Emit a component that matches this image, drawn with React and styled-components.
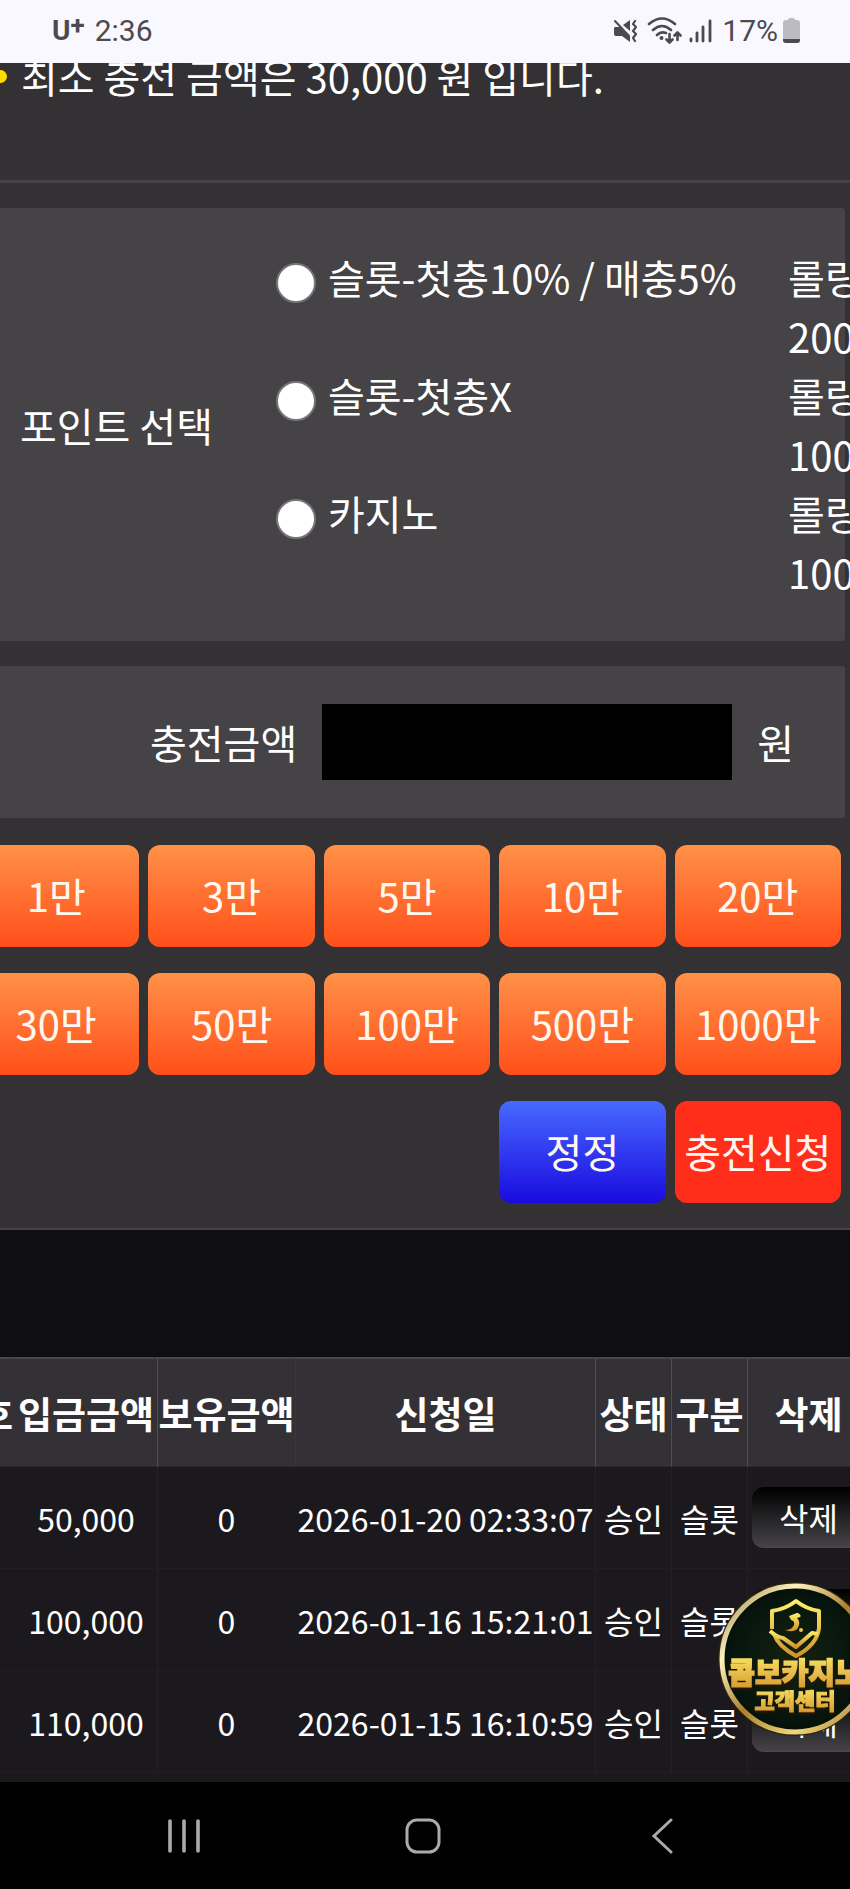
import { useState } from "react";
import styled, { createGlobalStyle } from "styled-components";

const GlobalStyle = createGlobalStyle`
	* {
		box-sizing: border-box;
	}

	body {
		margin: 0;
		background: #000;
		font-family: "Noto Sans CJK KR", "Noto Sans", sans-serif;
		color: #fff;
	}

	button, input {
		font-family: inherit;
		color: inherit;
	}
`;

const Page = styled.div`
	position: relative;
	display: flex;
	flex-direction: column;
	min-height: 100vh;
	overflow: hidden;
	background: #0f0e12;
`;

const StatusBar = styled.header`
	display: flex;
	justify-content: space-between;
	align-items: center;
	height: 63px;
	padding: 0 50px 2px 52px;
	background: #f9f8ff;
	color: #4c4a50;
	font-family: Roboto, sans-serif;
	font-size: 30px;
	line-height: 36px;
`;

const StatusGroup = styled.div`
	display: flex;
	align-items: center;
	gap: ${(props) => props.$gap}px;
`;

const Carrier = styled.span`
	display: flex;
	align-items: flex-start;
	font-size: 28px;
	font-weight: 700;

	sup {
		font-size: 26px;
		line-height: 24px;
	}
`;

const Form = styled.form`
	margin-left: -28px;
	background: #343134;
	border-bottom: 2px solid #454348;
	font-size: 40px;
	line-height: 59px;
	white-space: nowrap;
`;

const Notice = styled.div`
	display: flex;
	flex-direction: column;
	justify-content: flex-end;
	height: 120px;
	padding: 0 0 74px 22px;
	border-bottom: 3px solid #454346;
	overflow: hidden;

	p {
		display: flex;
		align-items: center;
		gap: 14px;
		margin: 0;
	}
`;

const Bullet = styled.i`
	width: 13px;
	height: 13px;
	border-radius: 50%;
	background: #ffdc00;
`;

const Panel = styled.div`
	margin: 25px 5px 0 0;
	border-radius: 3px;
	background: #454346;
`;

const PointPanel = styled(Panel)`
	display: grid;
	grid-template-columns: 256px 1fr;
	align-items: center;
	padding: 40px 0 39px 48px;
`;

const Option = styled.div`
	display: grid;
	grid-template-columns: 1fr 57px;

	label {
		display: flex;
		align-items: center;
		align-self: start;
		gap: 12px;
	}
`;

const Radio = styled.input`
	appearance: none;
	width: 40px;
	height: 40px;
	margin: 10px 0 0;
	border: 2px solid #767478;
	border-radius: 50%;
	background: #fff;

	&:checked {
		box-shadow: inset 0 0 0 8px #fff;
		background: #1a73e8;
	}
`;

const AmountPanel = styled(Panel)`
	display: flex;
	align-items: center;
	gap: 25px;
	padding: 38px 51px 38px 178px;
`;

const AmountInput = styled.input`
	flex: 1;
	min-width: 0;
	height: 76px;
	padding: 0 16px;
	border: 0;
	border-radius: 0;
	background: #000;
	font-size: 40px;
	text-align: right;
`;

const ButtonGrid = styled.div`
	display: grid;
	grid-template-columns: repeat(5, 1fr);
	gap: 26px 9px;
	padding: 27px 9px 25px 1px;
`;

const tones = {
	orange: "linear-gradient(#ff9148, #ff4f1a)",
	blue: "linear-gradient(#4869ff, #190be0)",
	red: "#ff2e1a",
};

const Button = styled.button`
	height: 102px;
	padding: 0 0 1px;
	border: 0;
	border-radius: 12px;
	background: ${(props) => tones[props.$tone]};
	color: #fff8f0;
	font-size: 40px;
	line-height: 59px;
	white-space: nowrap;
`;

const ResetButton = styled(Button)`
	grid-column: 4;
`;

const History = styled.section`
	flex: 1;
	margin: 127px -20px 0 -56px;
	background: #1b191d;
`;

const Table = styled.table`
	width: 100%;
	table-layout: fixed;
	border-collapse: separate;
	border-spacing: 0;
	text-align: center;
	white-space: nowrap;

	th, td {
		padding: 0;
	}

	th {
		height: 110px;
		border-top: 2px solid #48464a;
		border-right: 1px solid #504e52;
		border-bottom: 1px solid #2b292d;
		background: #343136;
		font-size: 37px;
		line-height: 54px;
		font-weight: 700;
	}

	th:nth-child(1) {
		border-right-color: transparent;
	}

	th:nth-child(3) {
		border-right-color: #38363a;
	}

	td {
		height: 102px;
		border-right: 1px solid #232125;
		border-bottom: 1px solid #201e22;
		font-size: 32px;
		line-height: 46px;
	}

	td:nth-child(1), td:nth-child(3) {
		border-right-color: transparent;
	}
`;

const Col = styled.col`
	width: ${(props) => props.$width}px;
`;

const DeleteButton = styled.button`
	display: block;
	width: 114px;
	height: 61px;
	margin: 0 auto;
	padding: 0;
	border: 0;
	border-bottom: 1px solid #4c4a4e;
	border-radius: 12px;
	background: linear-gradient(#000, #454347);
	font-size: 32px;
	line-height: 46px;
`;

const SupportLink = styled.a`
	position: absolute;
	right: -22px;
	bottom: 153px;
	width: 154px;
	height: 154px;

	svg {
		display: block;
	}

	text {
		filter: drop-shadow(0 2px 1px #2a1605);
	}
`;

const NavBar = styled.nav`
	display: grid;
	grid-template-columns: repeat(3, 1fr);
	height: 107px;
	padding: 0 69px 0 64px;
	background: #000;
`;

const NavButton = styled.button`
	display: flex;
	justify-content: center;
	align-items: center;
	padding: 0;
	border: 0;
	background: none;
	color: #aba9ad;
`;

const points = [
	{ id: "slot-bonus", name: "슬롯-첫충10% / 매충5%", rolling: "200" },
	{ id: "slot-none", name: "슬롯-첫충X", rolling: "100" },
	{ id: "casino", name: "카지노", rolling: "100" },
];

const amounts = [1, 3, 5, 10, 20, 30, 50, 100, 500, 1000];

const columns = [
	{ name: "번호", width: 71 },
	{ name: "입금금액", width: 143 },
	{ name: "보유금액", width: 138 },
	{ name: "신청일" },
	{ name: "상태", width: 76 },
	{ name: "구분", width: 76 },
	{ name: "삭제", width: 122 },
];

const requests = [
	{ amount: "50,000", date: "2026-01-20 02:33:07" },
	{ amount: "100,000", date: "2026-01-16 15:21:01" },
	{ amount: "110,000", date: "2026-01-15 16:10:59" },
];

function MuteIcon() {
	return (
		<svg width="24" height="24" viewBox="0 0 24 24" fill="none" stroke="currentColor" strokeLinecap="round" strokeLinejoin="round">
			<path d="M2 8h5l10 9v6l-8-6H3q-2 0-2-2v-5q0-2 1-2z" fill="currentColor" stroke="none" />
			<path d="M10 6l7-5v11z" fill="currentColor" stroke="none" />
			<path d="M2 2l14 15" strokeWidth="2" />
			<path d="M22 2l-2 3 3 3-3 4 3 3-3 4 2 3" strokeWidth="2.200" />
		</svg>
	);
}

function WifiIcon() {
	return (
		<svg width="35" height="27" viewBox="0 0 35 27" fill="none" stroke="currentColor" strokeWidth="2.600" strokeLinecap="round" strokeLinejoin="round">
			<path d="M2 7Q15-4 28 7M6 13q9-8 18 0M10 18q4-4 9-2" />
			<circle cx="14.500" cy="21" r="2" fill="currentColor" stroke="none" />
			<path d="M22.500 17v8M19.500 22.500l3 3 3-3M30.500 23v-7M27.500 18.500l3-3 3 3" />
		</svg>
	);
}

function SignalIcon() {
	return (
		<svg width="23" height="24" viewBox="0 0 23 24" stroke="currentColor" strokeWidth="2.800" strokeLinecap="round">
			<path d="M2 20v2M8 14v8M14 8v14M21 2v20" />
		</svg>
	);
}

function BatteryIcon() {
	return (
		<svg width="17" height="26" viewBox="0 0 17 26">
			<path d="M5 2q0-2 2-2h3q2 0 2 2h2q3 0 3 3v17q0 3-3 3H3q-3 0-3-3V5q0-3 3-3z" fill="#bdbbc2" />
			<path d="M0 21h17v1q0 3-3 3H3q-3 0-3-3z" fill="#4c4a50" />
		</svg>
	);
}

function SupportBadge() {
	return (
		<svg width="154" height="154" viewBox="0 0 154 154">
			<defs>
				<radialGradient id="felt">
					<stop offset="0" stopColor="#17200d" />
					<stop offset="0.6" stopColor="#0a1a0f" />
					<stop offset="1" stopColor="#04110a" />
				</radialGradient>
				<linearGradient id="rim" x1="0" y1="0" x2="1" y2="1">
					<stop offset="0" stopColor="#8c7434" />
					<stop offset="0.25" stopColor="#fff3c0" />
					<stop offset="0.5" stopColor="#a8802f" />
					<stop offset="0.75" stopColor="#f3d57c" />
					<stop offset="1" stopColor="#8c6a24" />
				</linearGradient>
				<linearGradient id="gold" x1="0" y1="0" x2="0" y2="1">
					<stop offset="0" stopColor="#fff06a" />
					<stop offset="1" stopColor="#d2932e" />
				</linearGradient>
			</defs>
			<circle cx="77" cy="77" r="77" fill="#2c2410" />
			<circle cx="77" cy="77" r="73" fill="url(#felt)" stroke="url(#rim)" strokeWidth="5" />
			<g fill="none" stroke="url(#gold)" strokeWidth="4" strokeLinejoin="round">
				<path d="M54 47V29q14-2 24-10 10 8 23 10v17q-2 17-23 28-18-10-22-22" />
				<path d="M52 49q8 7 13 7l13 9 16-14 6 1" />
			</g>
			<path d="M79 31l-8 3 2 4q4 1 3 5-2 5-9 5 12 4 14-5 1-4-2-7 7-1 1-5z" fill="url(#gold)" />
			<circle cx="83" cy="48" r="2" fill="#e9c34e" />
			<g textAnchor="middle" fontFamily="'Noto Sans CJK KR', sans-serif" fontWeight="900" fill="url(#gold)" stroke="url(#gold)">
				<text x="77" y="102" fontSize="29" strokeWidth="1.500">콤보카지노</text>
				<text x="77" y="127" fontSize="22" strokeWidth="1">고객센터</text>
			</g>
		</svg>
	);
}

function ChargeForm() {
	const [amount, setAmount] = useState("");

	return (
		<Form onSubmit={(e) => e.preventDefault()}>
			<Notice>
				<p>
					<Bullet />
					최소 충전 금액은 30,000 원 입니다.
				</p>
			</Notice>
			<PointPanel role="radiogroup" aria-labelledby="point-title">
				<span id="point-title">포인트 선택</span>
				<div>
					{points.map((point) => (
						<Option key={point.id}>
							<label htmlFor={point.id}>
								<Radio type="radio" name="point" id={point.id} />
								{point.name}
							</label>
							<span>
								롤링
								<br />
								{point.rolling}
							</span>
						</Option>
					))}
				</div>
			</PointPanel>
			<AmountPanel>
				<label htmlFor="amount">충전금액</label>
				<AmountInput id="amount" value={amount} onChange={(e) => setAmount(e.target.value)} />
				<span>원</span>
			</AmountPanel>
			<ButtonGrid>
				{amounts.map((value) => (
					<Button key={value} type="button" $tone="orange" onClick={() => setAmount(String(value * 10000))}>
						{value}만
					</Button>
				))}
				<ResetButton type="button" $tone="blue" onClick={() => setAmount("")}>정정</ResetButton>
				<Button type="submit" $tone="red">충전신청</Button>
			</ButtonGrid>
		</Form>
	);
}

function RequestTable() {
	return (
		<History>
			<Table>
				<colgroup>
					{columns.map((column) => (
						<Col key={column.name} $width={column.width} />
					))}
				</colgroup>
				<thead>
					<tr>
						{columns.map((column) => (
							<th key={column.name} scope="col">{column.name}</th>
						))}
					</tr>
				</thead>
				<tbody>
					{requests.map((request) => (
						<tr key={request.date}>
							<td></td>
							<td>{request.amount}</td>
							<td>0</td>
							<td>{request.date}</td>
							<td>승인</td>
							<td>슬롯</td>
							<td>
								<DeleteButton type="button">삭제</DeleteButton>
							</td>
						</tr>
					))}
				</tbody>
			</Table>
		</History>
	);
}

function App() {
	return (
		<>
			<GlobalStyle />
			<Page>
				<StatusBar>
					<StatusGroup $gap={10}>
						<Carrier>U<sup>+</sup></Carrier>
						<span>2:36</span>
					</StatusGroup>
					<StatusGroup $gap={10}>
						<MuteIcon />
						<StatusGroup $gap={7}>
							<WifiIcon />
							<SignalIcon />
						</StatusGroup>
						<StatusGroup $gap={5}>
							<span>17%</span>
							<BatteryIcon />
						</StatusGroup>
					</StatusGroup>
				</StatusBar>
				<ChargeForm />
				<RequestTable />
				<NavBar>
					<NavButton aria-label="최근 앱">
						<svg width="36" height="36" viewBox="0 0 36 36" stroke="currentColor" strokeWidth="3.600" strokeLinecap="round">
							<path d="M4 3v30M18 3v30M32 3v30" />
						</svg>
					</NavButton>
					<NavButton aria-label="홈">
						<svg width="36" height="36" viewBox="0 0 36 36" fill="none" stroke="currentColor" strokeWidth="3">
							<rect x="2" y="2" width="32" height="32" rx="10" />
						</svg>
					</NavButton>
					<NavButton aria-label="뒤로">
						<svg width="22" height="36" viewBox="0 0 22 36" fill="none" stroke="currentColor" strokeWidth="3" strokeLinecap="round">
							<path d="M20 2L3 18l17 16" />
						</svg>
					</NavButton>
				</NavBar>
				<SupportLink href="#support" aria-label="콤보카지노 고객센터">
					<SupportBadge />
				</SupportLink>
			</Page>
		</>
	);
}

export default App;
